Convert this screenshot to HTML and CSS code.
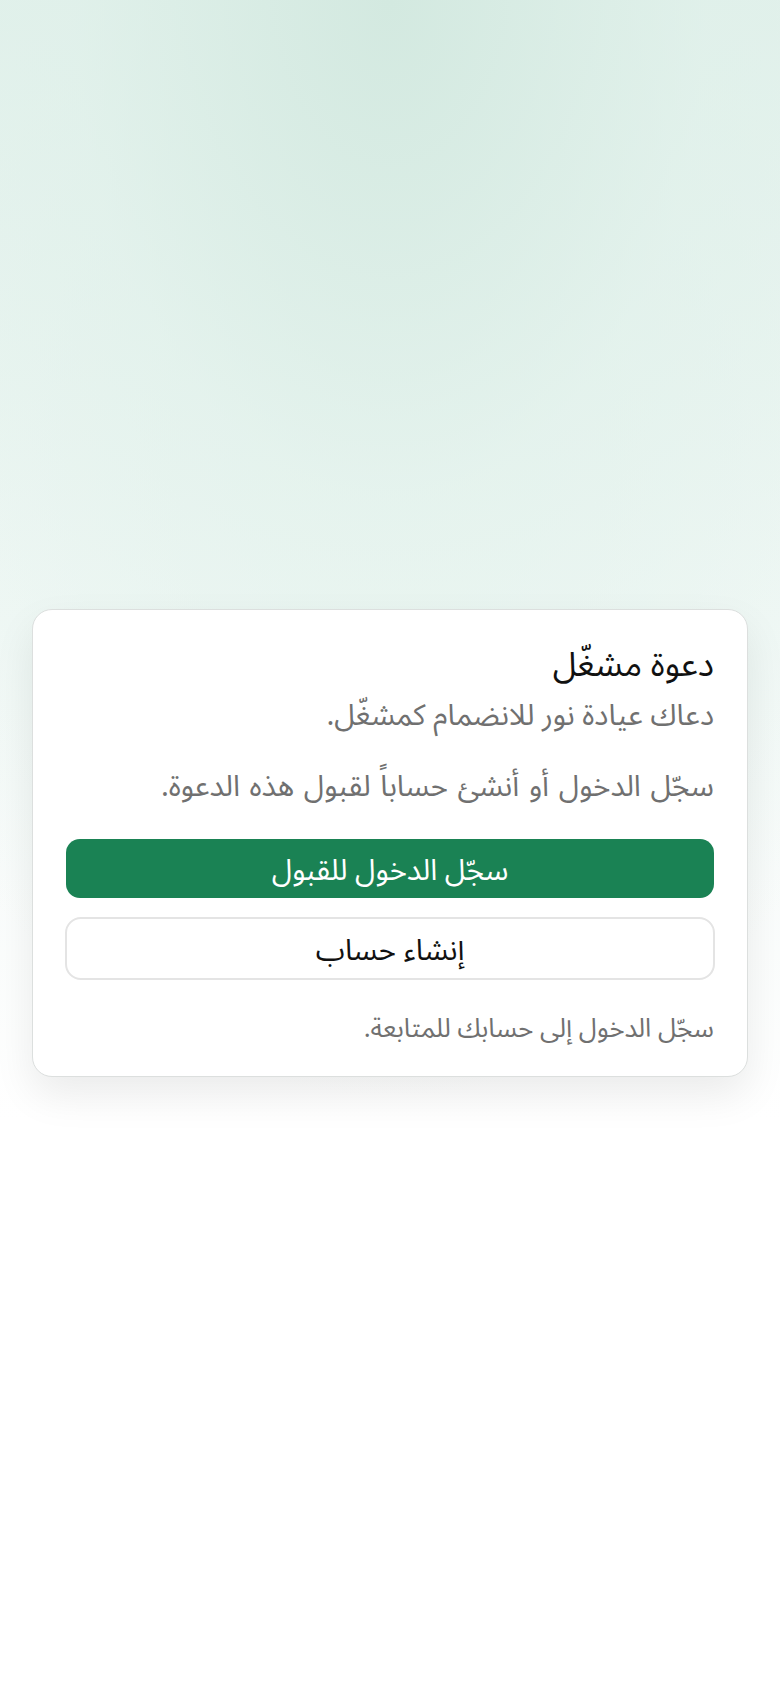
FILE: index.html
```html
<!DOCTYPE html>
<html lang="ar" dir="rtl">
<head>
    <meta charset="UTF-8">
    <meta name="viewport" content="width=device-width, initial-scale=1.0">
    <title>دعوة مشغّل</title>
    <link rel="stylesheet" href="styles.css">
</head>
<body>
    <main class="page">
        <div class="card">
            <h1 class="title">دعوة مشغّل</h1>
            <p class="lead">دعاك عيادة نور للانضمام كمشغّل.</p>
            <p class="hint">سجّل الدخول أو أنشئ حساباً لقبول هذه الدعوة.</p>
            <div class="actions">
                <button class="btn btn-primary">سجّل الدخول للقبول</button>
                <button class="btn btn-outline">إنشاء حساب</button>
            </div>
            <p class="note">سجّل الدخول إلى حسابك للمتابعة.</p>
        </div>
    </main>
</body>
</html>
```

FILE: styles.css
```css
html, body {
    margin: 0;
    padding: 0;
}
body {
    font-family: "Noto Sans Arabic", "DejaVu Sans", sans-serif;
    background: #fff;
    min-height: 100vh;
}
.page {
    min-height: 100vh;
    box-sizing: border-box;
    padding: 609px 32px 0;
    background:
        radial-gradient(ellipse 90% 65% at 50% 0%, #d3e9e0 0%, rgba(222, 240, 233, 0.6) 45%, rgba(255, 255, 255, 0) 100%),
        linear-gradient(#e3f1ec 0, #f3f9f7 620px, #fff 1120px);
}
.card {
    background: #fff;
    border: 1px solid #dcdfde;
    border-radius: 20px;
    padding: 31px 33px 27px;
    box-shadow: 0 18px 40px rgba(0, 0, 0, 0.08);
}
.title {
    margin: 0;
    font-size: 34px;
    font-weight: normal;
    color: #111;
    line-height: 48px;
}
.lead, .hint {
    margin: 5px 0 0;
    font-size: 29.5px;
    line-height: 44px;
    color: #707070;
}
.hint {
    margin-top: 27px;
    word-spacing: 2px;
}
.actions {
    display: flex;
    flex-direction: column;
    gap: 19px;
    margin-top: 30px;
}
.btn {
    font-family: inherit;
    font-size: 29.5px;
    border-radius: 14px;
    cursor: pointer;
    padding: 0;
}
.btn-primary {
    height: 59px;
    background: #1a8254;
    color: #fff;
    border: 0;
}
.btn-outline {
    height: 63px;
    background: #fff;
    color: #111;
    border: 2px solid #e4e4e4;
    border-radius: 16px;
    margin: 0 -1px;
}
.note {
    margin: 29px 0 0;
    font-size: 26px;
    line-height: 40px;
    color: #707070;
}
```
